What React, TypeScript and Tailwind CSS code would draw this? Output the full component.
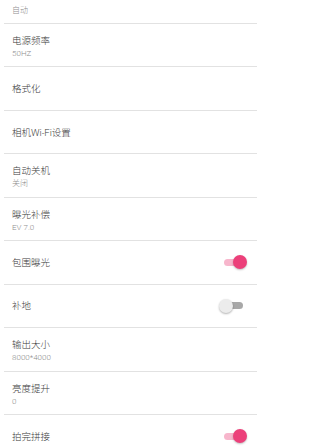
import React from 'react';

type Row =
  | { kind: 'text'; title: string; value?: string }
  | { kind: 'switch'; title: string; on: boolean };

const rows: Row[] = [
  { kind: 'text', title: '电源频率', value: '50HZ' },
  { kind: 'text', title: '格式化' },
  { kind: 'text', title: '相机Wi-Fi设置' },
  { kind: 'text', title: '自动关机', value: '关闭' },
  { kind: 'text', title: '曝光补偿', value: 'EV 7.0' },
  { kind: 'switch', title: '包围曝光', on: true },
  { kind: 'switch', title: '补地', on: false },
  { kind: 'text', title: '输出大小', value: '8000*4000' },
  { kind: 'text', title: '亮度提升', value: '0' },
  { kind: 'switch', title: '拍完拼接', on: true },
];

const font = { fontFamily: 'Roboto, "Noto Sans CJK SC", sans-serif' };

const Toggle = ({ on }: { on: boolean }) => (
  <div className="relative w-[28px] h-[14px] shrink-0">
    <div
      className={
        'absolute left-[5px] right-[4px] top-[3.5px] h-[7px] rounded-full ' +
        (on ? 'bg-[#f7b6cc]' : 'bg-[#a8a8a8]')
      }
    />
    {on ? (
      <div className="absolute right-0 top-0 w-[14px] h-[14px] rounded-full bg-[#ec407a] shadow-[0_1px_2px_rgba(0,0,0,0.25)]" />
    ) : (
      <div className="absolute left-0 top-0 w-[14px] h-[14px] rounded-full bg-[#ececec] shadow-[0_1px_2px_rgba(0,0,0,0.3)]" />
    )}
  </div>
);

export default function App() {
  return (
    <div className="w-[264px] h-[446px] overflow-hidden bg-white font-light" style={font}>
      <div className="ml-[4px] w-[253px]">
        <div className="h-[24px] border-b border-[#e2e2e2] pl-[8px] pt-[4px]">
          <div className="text-[8px] leading-[13px] text-[#8e8e8e]">自动</div>
        </div>
        {rows.map(row =>
          row.kind === 'switch' ? (
            <div
              key={row.title}
              className="h-[43.44px] border-b border-[#e2e2e2] pl-[8px] pr-[10px] flex items-center justify-between"
            >
              <span className="text-[9.5px] leading-[13px] text-[#3a3a3a]">{row.title}</span>
              <Toggle on={row.on} />
            </div>
          ) : row.value ? (
            <div key={row.title} className="h-[43.44px] border-b border-[#e2e2e2] pl-[8px] pt-[10px]">
              <div className="text-[9.5px] leading-[13px] text-[#3a3a3a]">{row.title}</div>
              <div className="text-[8px] leading-[13px] text-[#8e8e8e]">{row.value}</div>
            </div>
          ) : (
            <div key={row.title} className="h-[43.44px] border-b border-[#e2e2e2] pl-[8px] flex items-center">
              <span className="text-[9.5px] leading-[13px] text-[#3a3a3a]">{row.title}</span>
            </div>
          )
        )}
      </div>
    </div>
  );
}
